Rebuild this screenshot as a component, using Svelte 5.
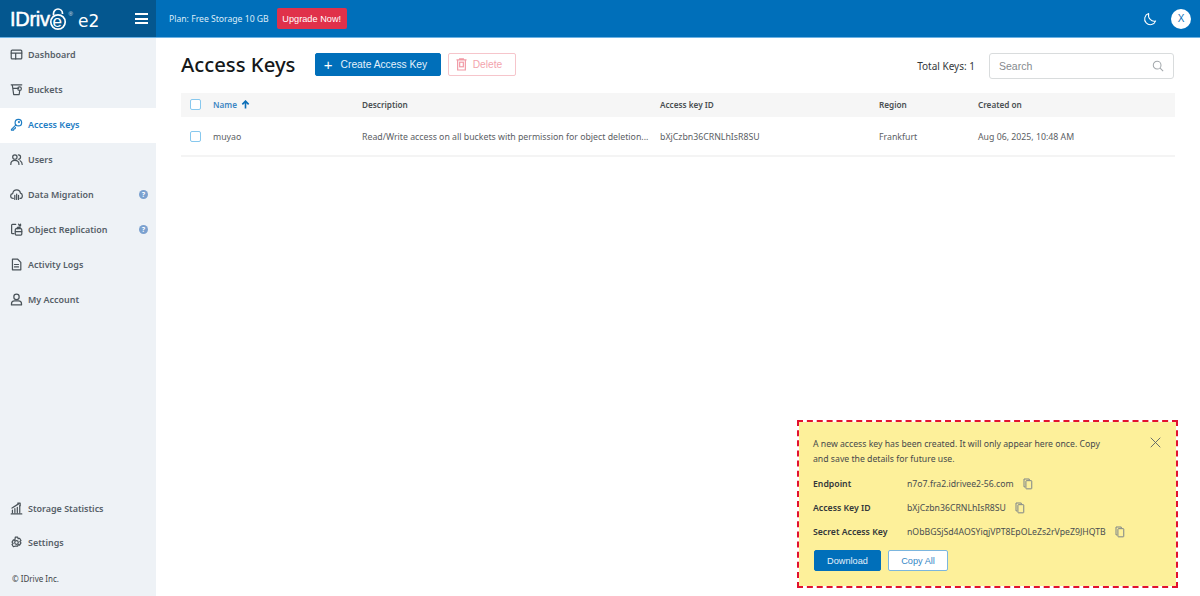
<script>
  const nav = [
    { label: 'Dashboard', icon: 'dash' },
    { label: 'Buckets', icon: 'bucket' },
    { label: 'Access Keys', icon: 'key', active: true },
    { label: 'Users', icon: 'users' },
    { label: 'Data Migration', icon: 'cloud', help: true },
    { label: 'Object Replication', icon: 'repl', help: true },
    { label: 'Activity Logs', icon: 'log' },
    { label: 'My Account', icon: 'user' }
  ];
  const lower = [
    { label: 'Storage Statistics', icon: 'stats' },
    { label: 'Settings', icon: 'gear' }
  ];
  const details = [
    { k: 'Endpoint', v: 'n7o7.fra2.idrivee2-56.com' },
    { k: 'Access Key ID', v: 'bXjCzbn36CRNLhIsR8SU' },
    { k: 'Secret Access Key', v: 'nObBGSjSd4AOSYiqjVPT8EpOLeZs2rVpeZ9JHQTB' }
  ];
</script>

{#snippet icon(name)}
  <svg class="ico" viewBox="0 0 16 16" fill="none" stroke="currentColor" stroke-width="1.5" stroke-linecap="round" stroke-linejoin="round">
    {#if name === 'dash'}
      <rect x="1.500" y="2.500" width="13" height="11" rx="1.200" /><path d="M1.500 6.300h13M7 6.300v7.200" />
    {:else if name === 'bucket'}
      <path d="M1.500 2.200h13M2.800 2.200l1.700 12h6.800l.7-5M3.600 6.500h7" /><circle cx="11.800" cy="7" r="2.200" />
    {:else if name === 'key'}
      <circle cx="10.300" cy="5.700" r="4" /><path d="M7.400 8.500 1.800 14v1h2.500l.6-1.600 1.400-.3.400-1.400" /><circle cx="11" cy="5" r=".6" />
    {:else if name === 'users'}
      <circle cx="6" cy="5" r="2.700" /><path d="M1 14c0-3 2-4.800 5-4.800s5 1.800 5 4.800M10.300 2.300a2.700 2.700 0 0 1 0 5.400M12.400 9.500c1.500.7 2.600 2.300 2.600 4.500" />
    {:else if name === 'cloud'}
      <path d="M4 12.800c-4 0-4.200-5.300-.7-5.800C3.800 3.800 6 2.300 8.300 2.300c2.300 0 4.100 1.500 4.500 3.900 3.300.6 3.200 6.600-.4 6.600" /><path d="M5.900 14V9M8.200 14V7.500M10.500 14V9" />
    {:else if name === 'repl'}
      <path d="M7 1.800H3a1 1 0 0 0-1 1v9.400a1 1 0 0 0 1 1h2" /><path d="M10.500 1.500l2.500 2M13 1.500v2h-2" /><rect x="6.500" y="7" width="8" height="7.800" rx="1.200" /><path d="M6.500 10.700h8M9 7V5.500h3.500" />
    {:else if name === 'log'}
      <path d="M3 1.500h6.500L13.300 5.300v9.200H3z" /><path d="M5.500 8h5M5.500 11h5" />
    {:else if name === 'user'}
      <circle cx="8" cy="4.800" r="3.300" /><path d="M1.800 14.700v-1.200c0-2.200 1.600-3.700 3.700-3.700h5c2 0 3.700 1.500 3.700 3.700v1.200z" />
    {:else if name === 'stats'}
      <path d="M1.500 14.700h13M3 13v-3M6 13V8M9 13V6.500M12 13V4.500M2.500 7.500 11 2" /><path d="M9.500 1.500 12.500 1.500 12.500 4.500" />
    {:else if name === 'gear'}
      <circle cx="8" cy="8" r="2.200" /><path d="M6.500 1.500h3l.5 1.900 1.800-.6 1.700 2.700-1.400 1.500 1.400 1.500-1.700 2.700-1.800-.6-.5 1.900h-3L6 12.600l-1.800.6-1.700-2.700L3.900 9 2.500 7.500l1.700-2.700 1.800.6z" />
    {/if}
  </svg>
{/snippet}

{#snippet copy()}
  <svg class="copy" viewBox="0 0 12 14" fill="none" stroke="#7d8489" stroke-width="1.200">
    <path d="M2.600 10.500H1.200V1h6.300v1.300" /><rect x="3.500" y="3" width="7" height="9.800" rx=".6" />
  </svg>
{/snippet}

<div class="app">
  <header>
    <div class="brand">
      <div class="logo">
        <span class="wordmark">IDriv</span>
        <span class="lock">
          <svg viewBox="0 0 18 24" width="18" height="24" fill="none" stroke="#fff" stroke-width="1.700">
            <path d="M4.500 8.500V6.500a4.500 4.500 0 0 1 9 0V7" />
            <circle cx="9" cy="15" r="7.200" />
          </svg>
          <span class="lock-e">e</span>
        </span>
        <span class="reg">®</span>
        <span class="e2">e2</span>
      </div>
      <div class="burger" aria-label="Menu"><i></i><i></i><i></i></div>
    </div>
    <div class="topbar">
      <span class="plan">Plan: Free Storage 10 GB</span>
      <button class="upgrade">Upgrade Now!</button>
      <div class="top-right">
        <svg class="moon" viewBox="0 0 16 16" fill="none" stroke="#fff" stroke-width="1.200" stroke-linejoin="round">
          <path d="M6.500 1.800a6.500 6.500 0 1 0 8 8.400c-4.700 1.500-9.300-3.300-8-8.400z" />
        </svg>
        <span class="avatar">X</span>
      </div>
    </div>
  </header>

  <div class="body">
    <aside>
      <nav>
        {#each nav as item}
          <div class="nav-item" class:active={item.active}>
            {@render icon(item.icon)}
            <span class="nav-label">{item.label}</span>
            {#if item.help}<span class="help">?</span>{/if}
          </div>
        {/each}
      </nav>
      <div class="lower">
        {#each lower as item}
          <div class="nav-item">
            {@render icon(item.icon)}
            <span class="nav-label">{item.label}</span>
          </div>
        {/each}
        <div class="copyright">© IDrive Inc.</div>
      </div>
    </aside>

    <main>
      <div class="toolbar">
        <h1>Access Keys</h1>
        <button class="btn primary create"><span class="plus">+</span>Create Access Key</button>
        <button class="btn del">
          <svg viewBox="0 0 12 14" width="11" height="13" fill="none" stroke="#f19aa5" stroke-width="1.300">
            <path d="M0.500 2h11M4 2V.8h4V2M1.800 2v11h8.400V2" /><rect x="4" y="4.500" width="4" height="5" />
          </svg>
          Delete
        </button>
        <span class="total">Total Keys: 1</span>
        <div class="search">
          <span>Search</span>
          <svg viewBox="0 0 14 14" width="12" height="12" fill="none" stroke="#a3a8ac" stroke-width="1.200">
            <circle cx="6" cy="6" r="4.500" /><path d="M9.500 9.500 13 13" />
          </svg>
        </div>
      </div>

      <div class="table">
        <div class="row head">
          <span class="c-check"><i class="box"></i></span>
          <span class="c-name sorted">Name
            <svg viewBox="0 0 10 10" width="9" height="9" fill="none" stroke="#0d6fb8" stroke-width="1.800"><path d="M5 9.500V1.500M1.500 4.800 5 1.200l3.500 3.600" /></svg>
          </span>
          <span class="c-desc">Description</span>
          <span class="c-id">Access key ID</span>
          <span class="c-region">Region</span>
          <span class="c-date">Created on</span>
        </div>
        <div class="row data">
          <span class="c-check"><i class="box"></i></span>
          <span class="c-name">muyao</span>
          <span class="c-desc">Read/Write access on all buckets with permission for object deletion...</span>
          <span class="c-id">bXjCzbn36CRNLhIsR8SU</span>
          <span class="c-region">Frankfurt</span>
          <span class="c-date">Aug 06, 2025, 10:48 AM</span>
        </div>
      </div>
    </main>
  </div>

  <div class="notice">
    <p>A new access key has been created. It will only appear here once. Copy and save the details for future use.</p>
    <svg class="close" viewBox="0 0 12 12" fill="none" stroke="#5c6266" stroke-width="1"><path d="M.8.8l10.400 10.400M11.200.8.800 11.200" /></svg>
    <dl>
      {#each details as d}
        <div class="detail">
          <dt>{d.k}</dt>
          <dd>{d.v}</dd>
          {@render copy()}
        </div>
      {/each}
    </dl>
    <div class="actions">
      <button class="btn primary dl">Download</button>
      <button class="btn outline">Copy All</button>
    </div>
  </div>
</div>

<style>
  :global(body) { margin: 0; background: #fff; }
  .app {
    position: relative;
    width: 1200px;
    height: 596px;
    overflow: hidden;
    font-family: "Noto Sans", "Open Sans", sans-serif;
    font-size: 10px;
    color: #50565a;
  }
  button { font-family: "Liberation Sans", Arial, sans-serif; cursor: pointer; }

  header {
    display: flex;
    height: 37px;
    background: #006fba;
    border-bottom: 1px solid #6cb2e4;
  }
  .brand {
    width: 156px;
    display: flex;
    align-items: center;
    background: #04578f;
    padding-left: 10px;
    box-sizing: border-box;
  }
  .logo {
    display: flex;
    align-items: center;
    color: #fff;
    font-family: "Liberation Sans", sans-serif;
    width: 125px;
    height: 37px;
  }
  .wordmark { font-size: 20px; letter-spacing: -.3px; margin-top: 2px; font-weight: 400; -webkit-text-stroke: .5px #fff; }
  .lock { position: relative; width: 18px; height: 24px; margin: 0 0 0 -1px; flex: none; }
  .lock svg { display: block; }
  .lock-e { position: absolute; left: 4px; top: 5px; font-size: 17px; line-height: 20px; }
  .reg { font-size: 6px; margin: -9px 0 0 2px; opacity: .85; }
  .e2 { font-family: "DejaVu Sans", sans-serif; font-size: 17px; margin: 4px 0 0 5px; letter-spacing: -.1px; }
  .burger { display: flex; flex-direction: column; gap: 2.500px; }
  .burger i { display: block; width: 13px; height: 2px; background: #fff; }

  .topbar { flex: 1; display: flex; align-items: center; padding-left: 13px; color: #dcedf9; }
  .plan { font-size: 8.650px; }
  .upgrade {
    margin-left: 8px;
    height: 21px;
    width: 70px;
    padding: 0;
    border: 0;
    border-radius: 2px;
    background: #e0314a;
    color: #fff;
    font-size: 9.200px;
  }
  .top-right { margin-left: auto; display: flex; align-items: center; gap: 14px; padding-right: 9px; }
  .moon { width: 14px; height: 14px; }
  .avatar {
    width: 20px; height: 20px; border-radius: 50%;
    background: #fff; color: #0b6fb6;
    display: flex; align-items: center; justify-content: center;
    font: 10px "Liberation Sans", sans-serif;
  }

  .body { display: flex; height: 558px; }
  aside {
    width: 156px;
    background: #eef2f6;
    display: flex;
    flex-direction: column;
    flex: none;
  }
  .nav-item {
    display: flex;
    align-items: center;
    height: 35px;
    box-sizing: border-box;
    padding: 0 0 2px 10px;
    color: #566068;
    font-weight: 600;
    font-size: 8.950px;
  }
  .nav-item .ico { color: #495258; }
  .nav-item.active { background: #fff; color: #1e7dc4; }
  .nav-item.active .ico { color: #1e7dc4; }
  .ico { width: 13px; height: 13px; margin-right: 5px; flex: none; }
  .nav-label { flex: 1; }
  .help {
    width: 9px; height: 9px; border-radius: 50%;
    margin-right: 8px;
    background: #7ba1cf; color: #fff;
    font-size: 7px; font-weight: 700; line-height: 9px; text-align: center;
  }
  .lower { margin-top: auto; }
  .lower .nav-item { height: 34px; }
  .copyright { font-size: 8px; color: #3e4448; padding: 13px 0 12px 12px; line-height: 11px; }

  main { flex: 1; padding: 0 25px; min-width: 0; }
  .toolbar { display: flex; align-items: center; height: 55px; }
  h1 { margin: 0 0 2px; font-size: 20.300px; font-weight: 500; color: #15181a; width: 134px; line-height: 53px; }
  .btn {
    border-radius: 2px;
    font-size: 10.250px;
    padding: 0;
    box-sizing: border-box;
    display: flex;
    align-items: center;
    justify-content: center;
  }
  .primary { background: #006fba; border: 1px solid #006fba; color: #e4f1fb; }
  .create { width: 126px; height: 23px; margin-bottom: 2px; padding-right: 5px; }
  .plus { font-size: 15px; font-weight: 400; margin-right: 8px; color: #fff; line-height: 14px; }
  .del {
    margin: 0 0 2px 7px;
    width: 68px; height: 23px;
    gap: 6px;
    padding-right: 6px;
    border: 1px solid #f6c5cb;
    background: #fff;
    color: #f3a3ad;
  }
  .total { margin-left: auto; font-size: 10px; color: #33383b; margin-right: 14px; }
  .search {
    width: 185px; height: 26px;
    box-sizing: border-box;
    border: 1px solid #d9dcdd;
    border-radius: 3px;
    display: flex; align-items: center; justify-content: space-between;
    padding: 0 9px;
    color: #858a8e;
    font: 10.500px "Liberation Sans", sans-serif;
    margin-right: 1px;
  }

  .row { display: flex; align-items: center; }
  .head { height: 24px; box-sizing: border-box; padding-bottom: 1px; background: #f6f6f6; font-weight: 600; font-size: 8.200px; color: #4a4f52; }
  .data { box-sizing: border-box; height: 40px; padding-top: 1px; border-bottom: 2px solid #f4f4f4; font-size: 8.750px; color: #5b6064; }
  .c-check { width: 32px; padding-left: 9px; box-sizing: border-box; display: flex; }
  .box { display: block; width: 9px; height: 9px; border: 1.500px solid #87c8ee; border-radius: 2px; background: #fff; }
  .c-name { width: 149px; }
  .sorted { color: #3d86c3; display: flex; align-items: center; gap: 4px; }
  .c-desc { width: 298px; white-space: nowrap; }
  .c-id { width: 219px; }
  .c-region { width: 99px; }

  .notice {
    position: absolute;
    left: 799px; top: 422px;
    width: 377px; height: 164px;
    box-sizing: border-box;
    background: #fdf09a;
    outline: 2px dashed #e2112f;
    padding: 15px 14px 0;
    color: #3c4042;
    font-size: 8.700px;
  }
  .notice p { margin: 0; width: 296px; line-height: 15px; color: #46494b; }
  .close { position: absolute; right: 15px; top: 15px; width: 11px; height: 11px; }
  dl { margin: 5px 0 0; }
  .detail { display: flex; align-items: center; height: 24px; }
  dt { width: 94px; font-weight: 600; color: #33373a; }
  dd { margin: 0; color: #4a4e50; }
  .copy { width: 10px; height: 12px; margin-left: 9px; }
  .actions { display: flex; gap: 7px; margin: 6px 0 0 1px; }
  .dl { width: 67px; height: 21px; font-size: 9.200px; }
  .outline { width: 60px; height: 21px; font-size: 9.200px; border: 1px solid #7cb6de; background: #fff; color: #3587c6; }
</style>
